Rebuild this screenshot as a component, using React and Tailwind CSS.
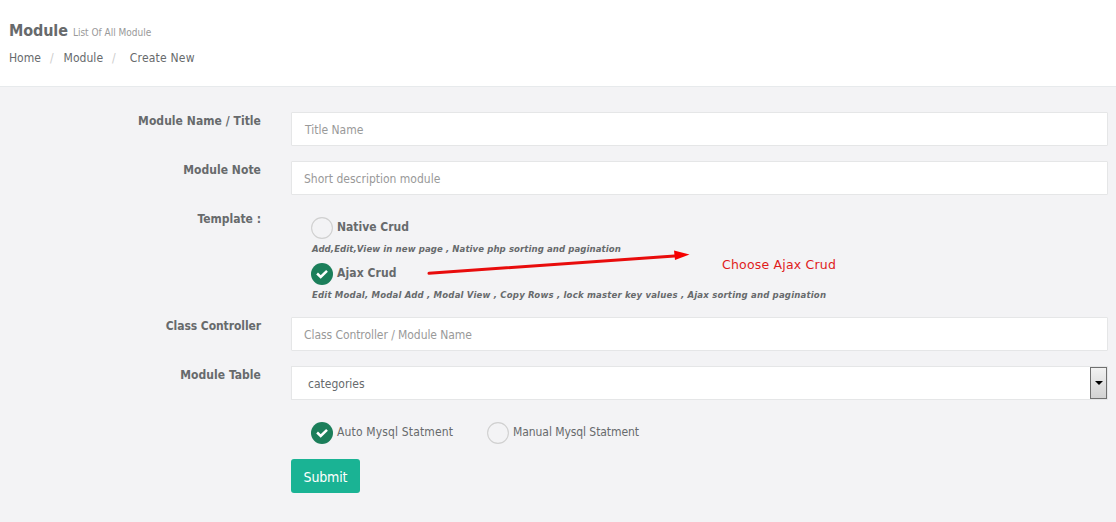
import React from 'react';

function Row({ label, className = '', children }) {
  return (
    <div className={`flex ${className}`}>
      <div className="w-[261px] shrink-0 text-right text-[12px] leading-[18px] font-bold">{label}</div>
      <div className="ml-[30px] w-[817px]">{children}</div>
    </div>
  );
}

const field =
  'block h-[34px] w-full rounded-[1px] border border-[#e5e6e7] bg-white pt-[2px] pl-3 text-[12px] text-[#676a6c] outline-none placeholder:text-[#999999] placeholder:opacity-100';

function Radio({ checked }) {
  return (
    <svg className="block shrink-0" width="22" height="22" viewBox="0 0 22 22">
      {checked ? (
        <>
          <circle cx="11" cy="11" r="11" fill="#1b7e5a" />
          <path d="M6.1 10.5 L9.7 14 L16 7.9" fill="none" stroke="#fff" strokeWidth="2.5" />
        </>
      ) : (
        <circle cx="11" cy="11" r="10.4" fill="none" stroke="#d0d0d0" strokeWidth="1.1" />
      )}
    </svg>
  );
}

function Option({ checked, className = '', children }) {
  return (
    <div className={`flex h-[22px] gap-1 text-[12px] leading-[20px] whitespace-nowrap ${className}`}>
      <Radio checked={checked} />
      <span>{children}</span>
    </div>
  );
}

export default function App() {
  return (
    <div className="relative h-[522px] w-[1116px] overflow-hidden bg-[#f3f3f5] font-['DejaVu_Sans_Condensed','DejaVu_Sans',sans-serif] text-[12px] text-[#676a6c] [font-stretch:condensed]">
      <header className="h-[87px] border-b border-[#e7eaec] bg-white pl-[9px]">
        <div className="flex items-baseline gap-[5px] pt-[20px] leading-[22px]">
          <h1 className="text-[16px] font-bold tracking-[-0.1px]"><span>Module</span></h1>
          <small className="text-[10px] text-[#999999]">List Of All Module</small>
        </div>
        <nav className="mt-[5px] flex leading-[18px] whitespace-nowrap">
          <span>Home</span>
          <span className="ml-[9px] text-[#cccccc]">/</span>
          <span className="ml-[10px] tracking-[0.05px]">Module</span>
          <span className="ml-[9px] text-[#cccccc]">/</span>
          <span className="ml-[14px] tracking-[0.22px]">Create New</span>
        </nav>
      </header>

      <form className="pt-[25px]">
        <Row label={<span className="tracking-[0.05px]">Module Name / Title</span>} className="h-[49px]">
          <input className={`${field} indent-px`} placeholder="Title Name" />
        </Row>
        <Row label={<span className="tracking-[0.05px]">Module Note</span>} className="h-[49px]">
          <input className={field} placeholder="Short description module" />
        </Row>
        <Row label={<span>Template :</span>} className="h-[107px]">
          <div className="pt-[7px] pl-5">
            <Option className="font-bold">Native Crud</Option>
            <p className="mt-[3px] h-[21px] pl-px text-[9.5px] leading-[14px] font-bold tracking-[0.09px] italic whitespace-nowrap">
              <span>Add,Edit,View in new page , Native php sorting and pagination</span>
            </p>
            <Option checked className="font-bold tracking-[0.1px]">Ajax Crud</Option>
            <p className="mt-[3px] pl-px text-[9.5px] leading-[14px] font-bold tracking-[0.18px] italic whitespace-nowrap">
              <span>Edit Modal, Modal Add , Modal View , Copy Rows , lock master key values , Ajax sorting and pagination</span>
            </p>
          </div>
        </Row>
        <Row label={<span className="tracking-[-0.08px]">Class Controller</span>} className="h-[49px]">
          <input className={`${field} tracking-[-0.07px]`} placeholder="Class Controller / Module Name" />
        </Row>
        <Row label={<span className="tracking-[0.05px]">Module Table</span>} className="h-[56px]">
          <div className="flex h-[34px] justify-between border border-[#e5e6e7] bg-white pl-4 leading-[34px]">
            <span>categories</span>
            <div className="flex h-[32px] w-[17px] items-center justify-center border border-[#707070] bg-linear-to-b from-[#f2f2f2] to-[#d2d2d2]">
              <svg width="8" height="4" viewBox="0 0 8 4"><path d="M0 0H8L4 4Z" fill="#000" /></svg>
            </div>
          </div>
        </Row>
        <div className="flex pl-[311px]">
          <Option checked className="w-[176px] tracking-[0.15px]">Auto Mysql Statment</Option>
          <Option className="tracking-[-0.07px]">Manual Mysql Statment</Option>
        </div>
        <button type="button" className="mt-[15px] ml-[291px] block h-[34px] w-[69px] rounded-[3px] bg-[#1ab394] pt-[2px] text-[14px] tracking-[-0.15px] text-white">
          <span>Submit</span>
        </button>
      </form>

      <svg className="absolute top-[245px] left-[420px]" width="280" height="36" viewBox="420 245 280 36">
        <path d="M429 273.3 L678 255.8" stroke="#e80c0c" strokeWidth="3" strokeLinecap="round" />
        <path d="M674 250.5 L689.5 254.4 L675 260Z" fill="#f60000" />
      </svg>
      <div className="absolute top-[256px] left-[722px] font-['DejaVu_Sans',sans-serif] text-[12.5px] leading-[18px] tracking-[0.2px] whitespace-nowrap text-[#e01b1b] [font-stretch:normal]">
        Choose Ajax Crud
      </div>
    </div>
  );
}
